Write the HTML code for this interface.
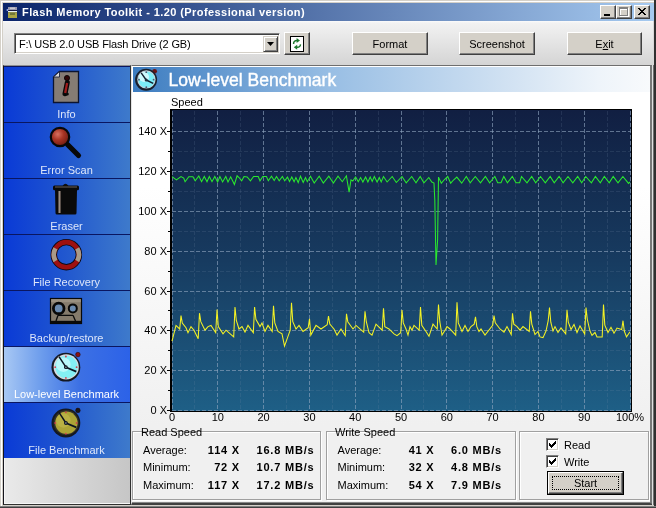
<!DOCTYPE html>
<html><head><meta charset="utf-8">
<style>
*{box-sizing:border-box}
html,body{margin:0;padding:0;width:656px;height:508px;overflow:hidden;background:#D4D0C8}
body{position:relative;font-family:"Liberation Sans", sans-serif;font-size:11px;color:#000}
.a{position:absolute}
#wrap{position:absolute;left:0;top:0;width:656px;height:508px;will-change:transform}
#frame{left:0;top:0;width:656px;height:508px;border-top:1px solid #D4D0C8;border-left:1px solid #D4D0C8;border-right:1px solid #404040;border-bottom:1px solid #404040}
#frame2{left:1px;top:1px;width:654px;height:506px;border-top:1px solid #fff;border-left:1px solid #fff;border-right:1px solid #808080;border-bottom:1px solid #808080}
#title{left:3px;top:3px;width:651px;height:18px;background:linear-gradient(to right,#0A246A,#A6CAF0)}
#ttext{left:22px;top:3px;height:18px;line-height:18px;color:#fff;font-weight:bold;font-size:11px;letter-spacing:0.42px;white-space:nowrap}
.tb{top:5px;width:16px;height:14px;background:#D4D0C8;border-top:1px solid #fff;border-left:1px solid #fff;border-right:1px solid #404040;border-bottom:1px solid #404040;box-shadow:inset -1px -1px 0 #808080}
#toolbar{left:3px;top:21px;width:651px;height:44px;background:linear-gradient(to bottom,#FBFBFB 0px,#F2F2F2 2px,#D5D5D5 43px)}
.btn{height:23px;background:#D4D0C8;border-top:1px solid #fff;border-left:1px solid #fff;border-right:1px solid #404040;border-bottom:1px solid #404040;box-shadow:inset -1px -1px 0 #808080;text-align:center;line-height:22px;font-size:11px;white-space:nowrap}
#combo{left:14px;top:33px;width:266px;height:21px;background:#fff;border-top:1px solid #808080;border-left:1px solid #808080;border-right:1px solid #fff;border-bottom:1px solid #fff;box-shadow:inset 1px 1px 0 #404040,inset -1px -1px 0 #D4D0C8}
#ctext{left:19px;top:34px;height:21px;line-height:21px;letter-spacing:-0.15px;white-space:nowrap}
#cdrop{left:263px;top:36px;width:15px;height:16px;background:#D4D0C8;border-top:1px solid #D4D0C8;border-left:1px solid #D4D0C8;border-right:1px solid #404040;border-bottom:1px solid #404040;box-shadow:inset 1px 1px 0 #fff,inset -1px -1px 0 #808080}
#sidebar{left:3px;top:65px;width:128px;height:440px;border-left:1px solid #14141C;background:linear-gradient(to right,#EAEAEA,#C6C6C6);box-shadow:inset 1px -1px 0 #F6F6F6;border-right:1px solid #303030;border-bottom:1px solid #303030;border-top:1px solid #909090}
.item{left:4px;width:126px;height:56px;background:linear-gradient(to right,#0A3AD6 0%,#1F55CF 45%,#3E7ACB 100%);border-top:1px solid #0A1660}
.item.sel{background:linear-gradient(to right,#A8C8F4 0%,#6C9CEC 30%,#3C70E4 60%,#2C62E8 100%)}
.ilabel{left:0;width:127px;text-align:center;color:#DDE6FA;font-size:11px;line-height:13px;white-space:nowrap}
#main{left:131px;top:65px;width:523px;height:440px;border-top:1px solid #6E6E6E;border-left:1px solid #E4E4E4;border-right:4px solid #787878;border-bottom:2px solid #404040;box-shadow:inset 0 -1px 0 #888;background:linear-gradient(to bottom,#FFFFFF 0px,#FFFFFF 120px,#F0F0F0 360px)}
#header{left:133px;top:67px;width:517px;height:25px;background:linear-gradient(to right,#3C7CC0 0%,#98BEE4 38%,#C8DCF0 67%,#EEF4FA 90%,#F8FAFC 100%)}
#htext{left:168.5px;top:67.5px;height:25px;line-height:25px;color:#fff;font-size:17.5px;letter-spacing:0.02px;-webkit-text-stroke:0.4px #fff;white-space:nowrap}
.yl{left:120px;width:47px;height:14px;line-height:14px;text-align:right;white-space:nowrap}
.xl{top:411px;width:40px;height:13px;line-height:13px;text-align:center;white-space:nowrap}
.gb{border:1px solid #A0A0A0;box-shadow:inset 1px 1px 0 #fff,1px 1px 0 #fff}
.gt{white-space:nowrap;line-height:13px}
.lab{white-space:nowrap;line-height:13px}
.val{white-space:nowrap;line-height:13px;font-weight:bold;letter-spacing:0.8px}
</style></head><body><div id="wrap">
<div id="frame" class="a"></div>
<div id="frame2" class="a"></div>
<div id="title" class="a"></div>
<svg class="a" style="left:0;top:0" width="22" height="22" viewBox="0 0 22 22">
  <rect x="8" y="7" width="9" height="3" fill="#9A9AAE"/>
  <rect x="10" y="7.5" width="5" height="1.5" fill="#C8C8D0"/>
  <rect x="8" y="10" width="9" height="1" fill="#1A1A40"/>
  <rect x="8" y="11" width="9" height="1.2" fill="#E4F0F0"/>
  <rect x="8" y="12.2" width="9" height="5.8" fill="#A8A444"/>
  <rect x="10" y="13" width="5" height="2" fill="#707838"/>
  <circle cx="7.4" cy="10" r="0.9" fill="#9AB0F0"/>
</svg>
<div id="ttext" class="a">Flash Memory Toolkit - 1.20 (Professional version)</div>
<div class="a tb" style="left:600px"><div class="a" style="left:3px;top:8px;width:6px;height:2px;background:#000"></div></div>
<div class="a tb" style="left:616px"><div class="a" style="left:3px;top:2px;width:9px;height:9px;border:1px solid #fff;border-top-width:2px"></div><div class="a" style="left:2px;top:1px;width:9px;height:9px;border:1px solid #808080;border-top-width:2px"></div></div>
<div class="a tb" style="left:634px"><svg class="a" style="left:2px;top:2px" width="10" height="8" viewBox="0 0 10 8"><path d="M1 0L8 7M8 0L1 7M2 0L9 7M9 0L2 7" stroke="#000" stroke-width="1"/></svg></div>

<div id="toolbar" class="a"></div>
<div id="combo" class="a"></div>
<div id="ctext" class="a">F:\ USB 2.0 USB Flash Drive (2 GB)</div>
<div id="cdrop" class="a"><svg class="a" style="left:3px;top:5px" width="7" height="4"><path d="M0 0H7L3.5 4Z" fill="#000"/></svg></div>
<div class="a btn" style="left:284px;top:32px;width:26px"></div>
<div class="a" style="left:290px;top:36px;width:14px;height:16px;background:#fff;border:1px solid #000"></div>
<svg class="a" style="left:290px;top:36px" width="14" height="16" viewBox="0 0 14 16">
  <path d="M3.6 8 Q3.4 4.6 7 4.5" stroke="#1F7A2E" stroke-width="1.5" fill="none"/>
  <path d="M6.6 2 L10 4.5 L6.6 7Z" fill="#1F7A2E"/>
  <path d="M10.4 8.4 Q10.6 11.2 7 11.3" stroke="#1F7A2E" stroke-width="1.5" fill="none"/>
  <path d="M7.2 8.8 L3.8 11.3 L7.2 13.8Z" fill="#1F7A2E"/>
</svg>
<div class="a btn" style="left:352px;top:32px;width:76px">Format</div>
<div class="a btn" style="left:459px;top:32px;width:76px">Screenshot</div>
<div class="a btn" style="left:567px;top:32px;width:75px">E<u>x</u>it</div>

<div id="sidebar" class="a"></div>
<div class="a item" style="top:66px"></div>
<div class="a item" style="top:122px"></div>
<div class="a item" style="top:178px"></div>
<div class="a item" style="top:234px"></div>
<div class="a item" style="top:290px"></div>
<div class="a item sel" style="top:346px"></div>
<div class="a item" style="top:402px"></div>
<div class="a ilabel" style="left:3px;top:108px">Info</div>
<div class="a ilabel" style="left:3px;top:164px">Error Scan</div>
<div class="a ilabel" style="left:3px;top:220px">Eraser</div>
<div class="a ilabel" style="left:3px;top:276px">File Recovery</div>
<div class="a ilabel" style="left:3px;top:332px">Backup/restore</div>
<div class="a ilabel" style="left:3px;top:388px;color:#FFFFFF">Low-level Benchmark</div>
<div class="a ilabel" style="left:3px;top:444px">File Benchmark</div>
<svg class="a" style="left:0;top:0" width="140" height="470" viewBox="0 0 140 470">
<path d="M59.5 71.5 L78.5 71.5 L78.5 102.5 L53.5 102.5 L53.5 77 Z" fill="#857C74" stroke="#0C1430" stroke-width="1.3"/>
<path d="M59.5 71.5 L59.5 77 L53.5 77 Z" fill="#D8D8D8" stroke="#0C1430" stroke-width="0.8"/>
<circle cx="67" cy="78" r="2.6" fill="#300808" stroke="#000" stroke-width="0.8"/>
<path d="M67.3 82.5 L65 93.8" stroke="#080808" stroke-width="5" fill="none" stroke-linecap="round"/>
<circle cx="67.2" cy="94" r="1.6" fill="#080808"/>
<path d="M67.1 83 L65.2 93" stroke="#A01C1C" stroke-width="2.3" fill="none"/>
<defs><radialGradient id="lens" cx="0.38" cy="0.35" r="0.7"><stop offset="0" stop-color="#D87060"/><stop offset="0.45" stop-color="#A83424"/><stop offset="1" stop-color="#6A1A10"/></radialGradient></defs>
<path d="M67.5 144.5 L78.5 155.5" stroke="#080808" stroke-width="5.2" stroke-linecap="round"/>
<circle cx="60" cy="137" r="9.2" fill="url(#lens)" stroke="#080808" stroke-width="2.2"/>
<path d="M62.5 186 Q65.5 181.5 68.5 186 Z" fill="#101010"/>
<rect x="53" y="185.5" width="26" height="4.8" fill="#0A0A0A" rx="1.5"/>
<rect x="55" y="186.5" width="22" height="1" fill="#6A6058"/>
<path d="M55 190 L77 190 L76.5 213 Q76.5 214.5 75 214.5 L57 214.5 Q55.5 214.5 55.5 213 Z" fill="#0A0A0A"/>
<rect x="58.2" y="191" width="2.6" height="22" fill="#6E625A"/>
<rect x="59" y="191" width="1" height="22" fill="#9A8E84"/>
<circle cx="66.35" cy="254.7" r="12.55" fill="none" stroke="#0A0A14" stroke-width="6.4"/>
<circle cx="66.35" cy="254.7" r="12.55" fill="none" stroke="#9E1010" stroke-width="4.6"/>
<path d="M55.5 248.4 A12.55 12.55 0 0 0 55.5 261" stroke="#A89A88" stroke-width="4.6" fill="none"/>
<path d="M77.2 248.4 A12.55 12.55 0 0 1 77.2 261" stroke="#A89A88" stroke-width="4.6" fill="none"/>
<rect x="50.5" y="298.5" width="31" height="25" fill="#857B6C" stroke="#080808" stroke-width="1.2"/>
<rect x="51.2" y="299.2" width="29.6" height="3" fill="#9A9080"/>
<rect x="51" y="320.8" width="30" height="2.6" fill="#0A0A0A"/>
<path d="M58 315.3 L73 315.3 M56 321 L58 315.3 M75.5 321 L73 315.3" stroke="#0A0A0A" stroke-width="1.3" fill="none"/>
<circle cx="58.7" cy="308.4" r="5.3" fill="#6A8AB0" stroke="#080808" stroke-width="2.8"/>
<circle cx="58.7" cy="308.4" r="2.8" fill="#6A8AB0"/>
<circle cx="72.8" cy="308.4" r="4" fill="#6A8AB0" stroke="#080808" stroke-width="2"/>
<circle cx="77.9" cy="354.59999999999997" r="2.3" fill="#8A1212" stroke="#200" stroke-width="0.5"/>
<circle cx="65.9" cy="367.2" r="14.399999999999999" fill="#141822"/>
<circle cx="66.2" cy="366.9" r="12.6" fill="#D8DCE0"/>
<circle cx="66.4" cy="367.0" r="11.2" fill="#84F0F4"/>
<circle cx="63.400000000000006" cy="364.7" r="7.199999999999999" fill="#E8FFFF" opacity="0.55"/>
<circle cx="65.9" cy="356.5" r="0.9" fill="#D04050"/>
<circle cx="76.6" cy="367.2" r="0.9" fill="#D04050"/>
<circle cx="65.9" cy="377.9" r="0.9" fill="#D04050"/>
<circle cx="55.2" cy="367.2" r="0.9" fill="#D04050"/>
<path d="M65.9 367.2 L59.00000000000001 356.59999999999997" stroke="#0C1420" stroke-width="1.5"/>
<path d="M65.9 367.2 L76.30000000000001 371.59999999999997" stroke="#0C1420" stroke-width="1.7"/>
<circle cx="65.9" cy="367.2" r="1.9" fill="#0C1420"/>
<circle cx="65.9" cy="367.2" r="0.8" fill="#A0A8B0"/>
<circle cx="77.9" cy="410.4" r="2.3" fill="#181818" stroke="#200" stroke-width="0.5"/>
<circle cx="65.9" cy="423" r="14.399999999999999" fill="#141822"/>
<circle cx="66.2" cy="422.7" r="12.6" fill="#303028"/>
<circle cx="66.4" cy="422.8" r="11.2" fill="#ACA436"/>
<circle cx="63.400000000000006" cy="420.5" r="7.199999999999999" fill="#C4BC50" opacity="0.55"/>
<circle cx="65.9" cy="412.3" r="0.9" fill="#D04050"/>
<circle cx="76.6" cy="423.0" r="0.9" fill="#D04050"/>
<circle cx="65.9" cy="433.7" r="0.9" fill="#D04050"/>
<circle cx="55.2" cy="423.0" r="0.9" fill="#D04050"/>
<path d="M65.9 423 L59.00000000000001 412.4" stroke="#0C1420" stroke-width="1.5"/>
<path d="M65.9 423 L76.30000000000001 427.4" stroke="#0C1420" stroke-width="1.7"/>
<circle cx="65.9" cy="423" r="1.9" fill="#0C1420"/>
<circle cx="65.9" cy="423" r="0.8" fill="#A0A8B0"/>
</svg>

<div id="main" class="a"></div>
<div id="header" class="a"></div>
<svg class="a" style="left:0;top:0" width="170" height="100" viewBox="0 0 170 100">
<circle cx="154.6" cy="71.3" r="2.4" fill="#6A1414"/>
<circle cx="146.1" cy="79.7" r="11" fill="#18202C"/>
<circle cx="146.4" cy="79.4" r="9.2" fill="#C8D0D8"/>
<circle cx="146.5" cy="79.6" r="8.2" fill="#7CEEF8"/>
<circle cx="144" cy="77" r="5" fill="#F0FFFF" opacity="0.7"/>
<circle cx="146.3" cy="72.2" r="0.9" fill="#505870"/>
<circle cx="153.6" cy="79.7" r="0.9" fill="#505870"/>
<circle cx="146.3" cy="87.2" r="0.9" fill="#505870"/>
<circle cx="139" cy="79.7" r="0.9" fill="#505870"/>
<path d="M146.2 80 L141.2 72.9 M146.2 80 L153.2 83.4" stroke="#142030" stroke-width="1.4"/>
<circle cx="146.2" cy="80" r="1.5" fill="#203040"/>
</svg>
<div id="htext" class="a">Low-level Benchmark</div>
<div class="a" style="left:171px;top:96px;line-height:13px">Speed</div>

<svg class="a" style="left:0;top:0" width="656" height="508" viewBox="0 0 656 508">
  <defs>
    <linearGradient id="pg" x1="0" y1="0" x2="0" y2="1">
      <stop offset="0" stop-color="#111F42"/>
      <stop offset="0.5" stop-color="#173B60"/>
      <stop offset="1" stop-color="#1E5F86"/>
    </linearGradient>
  </defs>
  <rect x="170" y="109" width="462" height="303" fill="#000"/>
  <rect x="172" y="110" width="459" height="301" fill="url(#pg)"/>
  <style>
    .gM{stroke:#90A6C0;stroke-width:1;stroke-dasharray:4 2;opacity:0.62}
    .gm{stroke:#7A90AC;stroke-width:1;stroke-dasharray:4 2;opacity:0.17}
  </style>
  <g shape-rendering="crispEdges">
<line x1="172.0" y1="111" x2="172.0" y2="410" class="gM"/>
<line x1="217.8" y1="111" x2="217.8" y2="410" class="gM"/>
<line x1="263.6" y1="111" x2="263.6" y2="410" class="gM"/>
<line x1="309.4" y1="111" x2="309.4" y2="410" class="gM"/>
<line x1="355.2" y1="111" x2="355.2" y2="410" class="gM"/>
<line x1="401.0" y1="111" x2="401.0" y2="410" class="gM"/>
<line x1="446.8" y1="111" x2="446.8" y2="410" class="gM"/>
<line x1="492.6" y1="111" x2="492.6" y2="410" class="gM"/>
<line x1="538.4" y1="111" x2="538.4" y2="410" class="gM"/>
<line x1="584.2" y1="111" x2="584.2" y2="410" class="gM"/>
<line x1="630.0" y1="111" x2="630.0" y2="410" class="gM"/>
<line x1="194.9" y1="111" x2="194.9" y2="410" class="gm"/>
<line x1="240.7" y1="111" x2="240.7" y2="410" class="gm"/>
<line x1="286.5" y1="111" x2="286.5" y2="410" class="gm"/>
<line x1="332.3" y1="111" x2="332.3" y2="410" class="gm"/>
<line x1="378.1" y1="111" x2="378.1" y2="410" class="gm"/>
<line x1="423.9" y1="111" x2="423.9" y2="410" class="gm"/>
<line x1="469.7" y1="111" x2="469.7" y2="410" class="gm"/>
<line x1="515.5" y1="111" x2="515.5" y2="410" class="gm"/>
<line x1="561.3" y1="111" x2="561.3" y2="410" class="gm"/>
<line x1="607.1" y1="111" x2="607.1" y2="410" class="gm"/>
<line x1="172" y1="410.5" x2="631" y2="410.5" class="gM"/>
<line x1="167" y1="410.5" x2="170" y2="410.5" stroke="#000" stroke-width="1"/>
<line x1="172" y1="390.5" x2="631" y2="390.5" class="gm"/>
<line x1="168" y1="390.5" x2="170" y2="390.5" stroke="#000" stroke-width="1"/>
<line x1="172" y1="370.5" x2="631" y2="370.5" class="gM"/>
<line x1="167" y1="370.5" x2="170" y2="370.5" stroke="#000" stroke-width="1"/>
<line x1="172" y1="350.5" x2="631" y2="350.5" class="gm"/>
<line x1="168" y1="350.5" x2="170" y2="350.5" stroke="#000" stroke-width="1"/>
<line x1="172" y1="330.5" x2="631" y2="330.5" class="gM"/>
<line x1="167" y1="330.5" x2="170" y2="330.5" stroke="#000" stroke-width="1"/>
<line x1="172" y1="310.5" x2="631" y2="310.5" class="gm"/>
<line x1="168" y1="310.5" x2="170" y2="310.5" stroke="#000" stroke-width="1"/>
<line x1="172" y1="291.5" x2="631" y2="291.5" class="gM"/>
<line x1="167" y1="291.5" x2="170" y2="291.5" stroke="#000" stroke-width="1"/>
<line x1="172" y1="271.5" x2="631" y2="271.5" class="gm"/>
<line x1="168" y1="271.5" x2="170" y2="271.5" stroke="#000" stroke-width="1"/>
<line x1="172" y1="251.5" x2="631" y2="251.5" class="gM"/>
<line x1="167" y1="251.5" x2="170" y2="251.5" stroke="#000" stroke-width="1"/>
<line x1="172" y1="231.5" x2="631" y2="231.5" class="gm"/>
<line x1="168" y1="231.5" x2="170" y2="231.5" stroke="#000" stroke-width="1"/>
<line x1="172" y1="211.5" x2="631" y2="211.5" class="gM"/>
<line x1="167" y1="211.5" x2="170" y2="211.5" stroke="#000" stroke-width="1"/>
<line x1="172" y1="191.5" x2="631" y2="191.5" class="gm"/>
<line x1="168" y1="191.5" x2="170" y2="191.5" stroke="#000" stroke-width="1"/>
<line x1="172" y1="171.5" x2="631" y2="171.5" class="gM"/>
<line x1="167" y1="171.5" x2="170" y2="171.5" stroke="#000" stroke-width="1"/>
<line x1="172" y1="151.5" x2="631" y2="151.5" class="gm"/>
<line x1="168" y1="151.5" x2="170" y2="151.5" stroke="#000" stroke-width="1"/>
<line x1="172" y1="131.5" x2="631" y2="131.5" class="gM"/>
<line x1="167" y1="131.5" x2="170" y2="131.5" stroke="#000" stroke-width="1"/>
  </g>
  <polyline points="172.0,176.7 176.4,179.9 181.0,176.5 183.7,178.0 185.1,181.7 188.8,176.7 192.9,176.7 195.2,180.8 198.8,176.0 201.6,181.7 204.3,176.5 207.0,181.7 209.3,176.5 212.0,181.7 214.8,176.5 217.6,182.0 219.9,176.5 222.6,182.0 225.8,176.5 228.0,182.0 230.7,176.8 234.4,184.5 237.1,175.8 239.0,177.5 241.7,180.8 244.0,176.5 247.2,177.0 250.4,180.8 253.6,176.5 258.2,176.5 260.0,180.8 262.8,176.5 266.4,176.5 268.3,180.8 271.5,176.2 274.2,180.5 276.5,176.5 279.2,180.8 282.4,176.5 284.7,180.8 287.5,177.0 289.5,181.5 291.8,177.0 294.1,181.7 295.9,177.5 298.2,182.5 300.5,176.2 303.2,182.5 305.5,177.5 307.3,181.7 310.5,176.2 314.2,183.0 319.2,176.2 323.3,183.0 328.8,176.2 333.4,183.0 338.0,176.2 342.3,181.7 346.4,175.8 349.1,192.2 351.0,179.9 352.8,181.0 355.6,177.0 358.3,181.7 360.6,177.5 362.9,182.0 365.6,177.0 367.9,182.0 370.2,177.0 372.2,181.5 374.3,176.5 377.1,182.0 379.3,177.5 381.2,182.0 383.5,176.5 387.1,182.0 392.2,176.5 396.3,182.5 402.0,176.5 406.2,182.8 411.7,176.5 416.0,182.8 420.2,176.5 423.9,182.8 428.8,177.5 431.8,182.0 434.0,183.0 434.8,200.0 436.0,265.0 437.6,240.0 438.5,177.1 441.3,183.2 444.5,179.5 447.7,176.5 450.7,183.2 453.5,180.0 456.8,177.1 461.7,183.2 466.3,176.5 470.2,182.8 475.3,176.5 480.5,182.8 485.4,176.5 489.6,182.8 494.8,176.5 497.7,182.8 501.0,182.8 503.8,176.5 507.4,182.8 512.3,176.5 516.0,182.8 519.6,182.8 521.5,176.5 527.0,182.8 531.7,176.5 535.7,182.8 540.5,176.5 545.3,182.8 550.2,176.5 554.2,182.8 559.1,176.5 563.1,182.8 568.0,176.5 572.8,182.8 577.7,176.5 581.7,182.8 585.7,176.5 591.4,182.8 595.4,176.5 600.3,182.8 604.3,176.5 609.2,182.8 613.2,176.5 618.0,182.8 622.9,176.5 628.5,183.4 630.0,182.0" fill="none" stroke="#2AE82E" stroke-width="1.05" stroke-linejoin="miter"/>
  <polyline points="172.0,341.2 176.0,325.4 179.7,329.0 181.0,315.6 182.3,323.0 186.0,327.8 188.0,332.7 191.0,326.6 194.0,330.2 198.2,338.8 199.5,313.2 200.8,321.7 205.0,330.2 208.0,326.6 211.0,325.4 215.7,332.7 217.0,309.5 218.3,326.6 223.0,333.9 226.0,330.2 233.7,337.0 235.0,307.0 236.3,320.5 239.0,329.0 242.0,326.6 245.0,332.0 248.0,325.4 253.3,332.7 254.6,307.0 255.9,319.3 260.0,326.6 262.0,323.0 265.0,331.5 268.0,325.4 272.2,331.5 273.5,305.9 274.8,323.0 278.0,331.5 282.0,333.9 284.5,346.1 290.2,330.2 291.5,302.8 292.8,321.7 296.0,329.0 299.0,325.4 303.0,331.5 308.2,327.8 309.5,318.7 310.8,335.1 316.0,325.4 321.0,329.0 327.2,324.8 328.5,316.2 329.8,324.1 334.0,329.0 337.0,335.1 341.0,329.0 345.2,335.7 346.5,313.8 347.8,321.7 353.0,329.0 356.0,325.4 363.7,332.1 365.0,311.3 366.3,321.7 369.0,332.7 372.0,335.1 376.0,324.1 382.2,330.2 383.5,308.3 384.8,326.6 389.0,329.0 394.0,333.9 397.0,335.7 400.7,332.7 402.0,310.1 403.3,322.9 406.0,329.0 408.0,335.1 410.0,326.6 412.0,330.2 414.0,325.4 419.2,330.2 420.5,307.0 421.8,325.4 426.0,331.5 429.0,336.3 433.0,324.1 437.2,329.0 438.5,304.6 439.8,321.7 442.0,335.1 445.0,330.2 447.0,326.6 450.0,329.0 455.7,335.1 457.0,302.2 458.3,322.9 462.0,331.5 465.0,325.4 468.0,331.5 471.0,326.6 474.2,324.1 475.5,316.8 476.8,326.6 479.0,331.5 481.0,329.0 485.0,335.1 492.7,325.4 494.0,315.6 495.3,322.9 500.0,329.0 504.0,332.1 507.0,326.6 511.2,334.5 512.5,313.2 513.8,324.1 517.0,326.6 520.0,330.2 523.0,326.6 529.2,331.5 530.5,311.3 531.8,324.1 535.0,334.5 538.0,331.5 540.0,336.9 543.0,337.6 546.0,331.0 548.2,320.7 549.5,307.6 550.8,322.2 553.0,331.0 555.0,326.6 558.0,332.5 561.0,328.0 565.7,333.9 567.0,309.8 568.3,322.2 571.0,329.5 574.0,324.4 577.0,332.5 580.0,325.9 584.7,333.9 586.0,307.6 587.3,319.3 590.0,331.0 592.0,335.4 595.0,332.5 597.0,336.9 602.2,336.9 603.5,304.6 604.8,325.1 608.0,332.5 611.0,327.3 614.0,333.2 617.0,328.1 621.7,329.5 623.0,320.7 624.3,331.0 626.5,336.9 630.0,331.7" fill="none" stroke="#F4F224" stroke-width="1.05" stroke-linejoin="miter"/>
</svg>
<div class="a yl" style="top:403.0px">0 X</div>
<div class="a yl" style="top:363.2px">20 X</div>
<div class="a yl" style="top:323.3px">40 X</div>
<div class="a yl" style="top:283.5px">60 X</div>
<div class="a yl" style="top:243.7px">80 X</div>
<div class="a yl" style="top:203.9px">100 X</div>
<div class="a yl" style="top:164.0px">120 X</div>
<div class="a yl" style="top:124.2px">140 X</div>
<div class="a xl" style="left:152.0px">0</div>
<div class="a xl" style="left:197.8px">10</div>
<div class="a xl" style="left:243.6px">20</div>
<div class="a xl" style="left:289.4px">30</div>
<div class="a xl" style="left:335.2px">40</div>
<div class="a xl" style="left:381.0px">50</div>
<div class="a xl" style="left:426.8px">60</div>
<div class="a xl" style="left:472.6px">70</div>
<div class="a xl" style="left:518.4px">80</div>
<div class="a xl" style="left:564.2px">90</div>
<div class="a xl" style="left:610.0px">100%</div>

<div class="a gb" style="left:132px;top:431px;width:189px;height:69px"></div>
<div class="a gb" style="left:326px;top:431px;width:190px;height:69px"></div>
<div class="a gb" style="left:519px;top:431px;width:130px;height:69px"></div>
<div class="a gt" style="left:141px;top:426px">Read Speed</div>
<div class="a gt" style="left:335px;top:426px">Write Speed</div>
<div class="a lab" style="left:143px;top:443.5px">Average:</div>
<div class="a val" style="left:172px;width:68px;text-align:right;top:443.5px">114 X</div>
<div class="a val" style="left:256.5px;top:443.5px">16.8 MB/s</div>
<div class="a lab" style="left:143px;top:461.3px">Minimum:</div>
<div class="a val" style="left:172px;width:68px;text-align:right;top:461.3px">72 X</div>
<div class="a val" style="left:256.5px;top:461.3px">10.7 MB/s</div>
<div class="a lab" style="left:143px;top:478.8px">Maximum:</div>
<div class="a val" style="left:172px;width:68px;text-align:right;top:478.8px">117 X</div>
<div class="a val" style="left:256.5px;top:478.8px">17.2 MB/s</div>
<div class="a lab" style="left:337.5px;top:443.5px">Average:</div>
<div class="a val" style="left:366.5px;width:68px;text-align:right;top:443.5px">41 X</div>
<div class="a val" style="left:451.0px;top:443.5px">6.0 MB/s</div>
<div class="a lab" style="left:337.5px;top:461.3px">Minimum:</div>
<div class="a val" style="left:366.5px;width:68px;text-align:right;top:461.3px">32 X</div>
<div class="a val" style="left:451.0px;top:461.3px">4.8 MB/s</div>
<div class="a lab" style="left:337.5px;top:478.8px">Maximum:</div>
<div class="a val" style="left:366.5px;width:68px;text-align:right;top:478.8px">54 X</div>
<div class="a val" style="left:451.0px;top:478.8px">7.9 MB/s</div>
<div class="a" style="left:546px;top:438px;width:13px;height:13px;background:#fff;border-top:1px solid #808080;border-left:1px solid #808080;border-right:1px solid #fff;border-bottom:1px solid #fff;box-shadow:inset 1px 1px 0 #404040,inset -1px -1px 0 #D4D0C8"></div>
<div class="a" style="left:555px;top:441px;width:1px;height:1px;background:#000"></div>
<div class="a" style="left:554px;top:442px;width:2px;height:1px;background:#000"></div>
<div class="a" style="left:549px;top:443px;width:1px;height:1px;background:#000"></div>
<div class="a" style="left:553px;top:443px;width:3px;height:1px;background:#000"></div>
<div class="a" style="left:549px;top:444px;width:2px;height:1px;background:#000"></div>
<div class="a" style="left:552px;top:444px;width:3px;height:1px;background:#000"></div>
<div class="a" style="left:549px;top:445px;width:5px;height:1px;background:#000"></div>
<div class="a" style="left:550px;top:446px;width:3px;height:1px;background:#000"></div>
<div class="a" style="left:551px;top:447px;width:1px;height:1px;background:#000"></div>
<div class="a lab" style="left:564px;top:439px">Read</div>
<div class="a" style="left:546px;top:455px;width:13px;height:13px;background:#fff;border-top:1px solid #808080;border-left:1px solid #808080;border-right:1px solid #fff;border-bottom:1px solid #fff;box-shadow:inset 1px 1px 0 #404040,inset -1px -1px 0 #D4D0C8"></div>
<div class="a" style="left:555px;top:458px;width:1px;height:1px;background:#000"></div>
<div class="a" style="left:554px;top:459px;width:2px;height:1px;background:#000"></div>
<div class="a" style="left:549px;top:460px;width:1px;height:1px;background:#000"></div>
<div class="a" style="left:553px;top:460px;width:3px;height:1px;background:#000"></div>
<div class="a" style="left:549px;top:461px;width:2px;height:1px;background:#000"></div>
<div class="a" style="left:552px;top:461px;width:3px;height:1px;background:#000"></div>
<div class="a" style="left:549px;top:462px;width:5px;height:1px;background:#000"></div>
<div class="a" style="left:550px;top:463px;width:3px;height:1px;background:#000"></div>
<div class="a" style="left:551px;top:464px;width:1px;height:1px;background:#000"></div>
<div class="a lab" style="left:564px;top:456px">Write</div>
<div class="a" style="left:547px;top:471px;width:77px;height:24px;border:1px solid #000;background:#D4D0C8"><div class="a btn" style="left:0;top:0;width:75px;height:22px;line-height:20px">Start</div><div class="a" style="left:4px;top:4px;width:67px;height:14px;border:1px dotted #000"></div></div>

<div class="a" style="left:652px;top:65px;width:1px;height:440px;background:#E0E0E0"></div>
<div class="a" style="left:653px;top:21px;width:1px;height:44px;background:#D8D8D8"></div>
<div class="a" style="left:653px;top:65px;width:1px;height:442px;background:#707070"></div>
<div class="a" style="left:654px;top:0px;width:2px;height:508px;background:#303030"></div>
<div class="a" style="left:3px;top:505px;width:651px;height:1px;background:#D4D0C8"></div>
<div class="a" style="left:0px;top:506px;width:656px;height:1px;background:#808080"></div>
<div class="a" style="left:0px;top:507px;width:656px;height:1px;background:#404040"></div>
</div></body></html>
